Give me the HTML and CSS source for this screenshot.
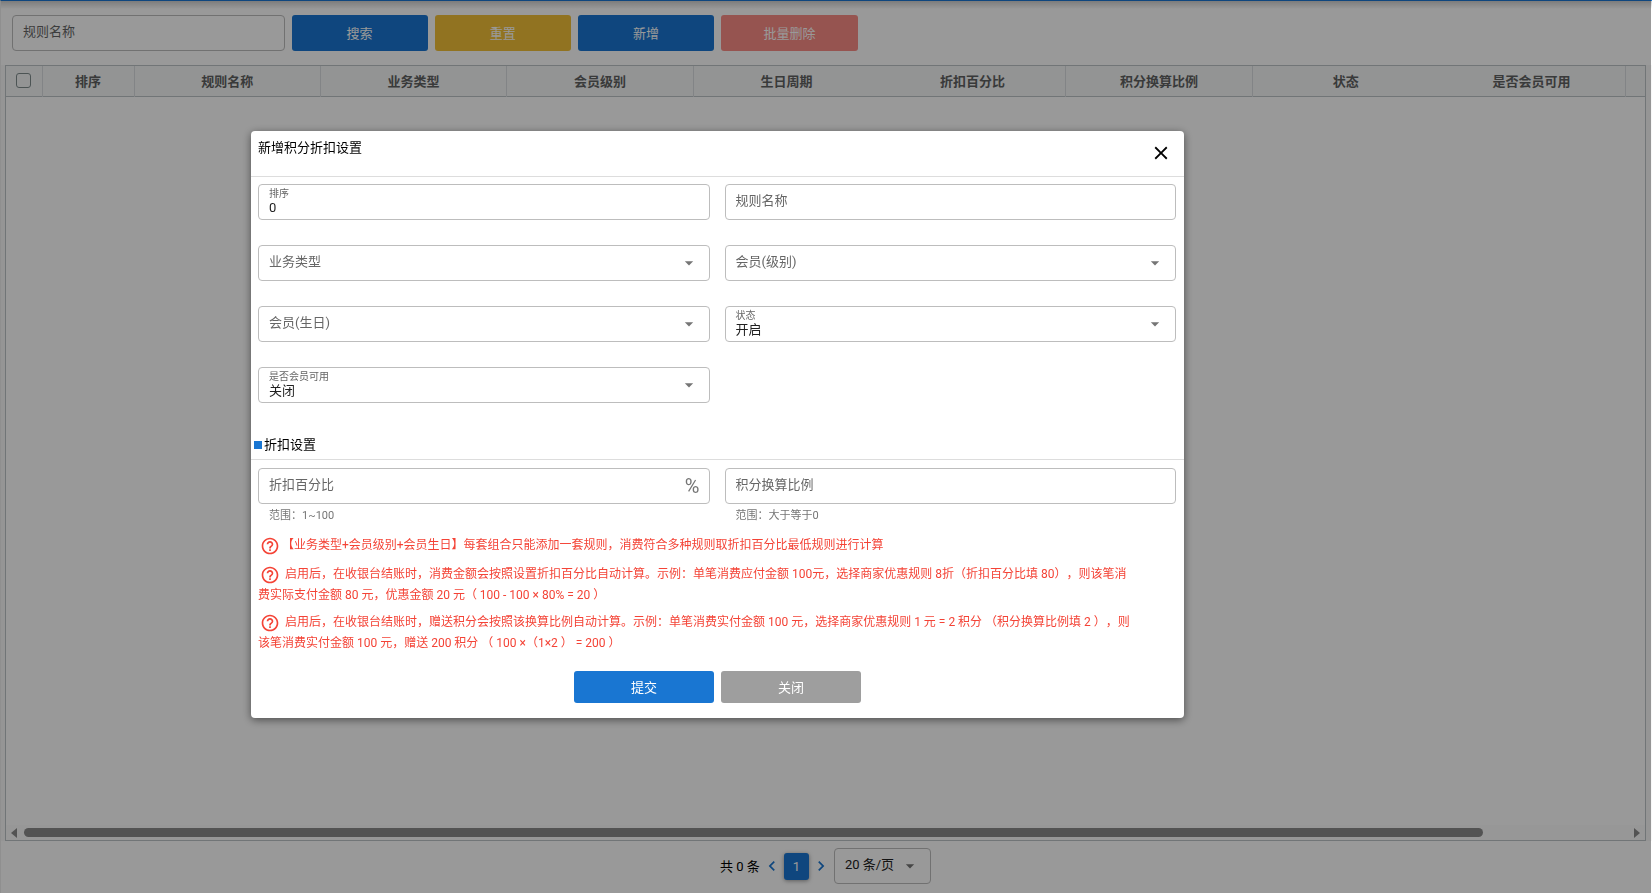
FILE: index.html
```html
<!DOCTYPE html>
<html lang="zh-CN">
<head>
<meta charset="utf-8">
<title>积分折扣设置</title>
<link rel="stylesheet" href="styles.css">
</head>
<body>
<svg width="0" height="0" class="sprite" aria-hidden="true">
  <symbol id="caret" viewBox="0 0 24 24"><path d="M7 10l5 5 5-5z"/></symbol>
  <symbol id="help" viewBox="0 0 24 24"><path d="M11 18h2v-2h-2v2zm1-16C6.48 2 2 6.48 2 12s4.48 10 10 10 10-4.48 10-10S17.52 2 12 2zm0 18c-4.41 0-8-3.59-8-8s3.59-8 8-8 8 3.59 8 8-3.59 8-8 8zm0-14c-2.21 0-4 1.79-4 4h2c0-1.1.9-2 2-2s2 .9 2 2c0 2-3 1.75-3 5h2c0-2.25 3-2.5 3-5 0-2.21-1.79-4-4-4z"/></symbol>
  <symbol id="close" viewBox="0 0 24 24"><path d="M19 6.41L17.59 5 12 10.59 6.41 5 5 6.41 10.59 12 5 17.59 6.41 19 12 13.41 17.59 19 19 17.59 13.41 12z"/></symbol>
  <symbol id="left" viewBox="0 0 24 24"><path d="M15.41 7.41L14 6l-6 6 6 6 1.41-1.41L10.83 12z"/></symbol>
  <symbol id="right" viewBox="0 0 24 24"><path d="M10 6L8.59 7.41 13.17 12l-4.58 4.59L10 18l6-6z"/></symbol>
</svg>
<main class="page">
  <form class="toolbar">
    <div class="field"><input type="text" placeholder="规则名称" aria-label="规则名称"></div>
    <button type="button" class="btn primary">搜索</button>
    <button type="button" class="btn warning">重置</button>
    <button type="button" class="btn primary">新增</button>
    <button type="button" class="btn danger" disabled>批量删除</button>
  </form>
  <div class="grid-wrap">
    <div class="grid">
      <table>
        <colgroup><col class="c-check"><col class="c-sort"><col><col><col><col><col><col><col><col><col class="c-end"></colgroup>
        <thead>
          <tr>
            <th><input type="checkbox" aria-label="全选"></th>
            <th>排序</th>
            <th>规则名称</th>
            <th>业务类型</th>
            <th>会员级别</th>
            <th class="no-line">生日周期</th>
            <th>折扣百分比</th>
            <th>积分换算比例</th>
            <th class="no-line">状态</th>
            <th>是否会员可用</th>
            <td></td>
          </tr>
        </thead>
      </table>
      <div class="scrollbar">
        <svg width="6" height="10" viewBox="0 0 6 10"><path d="M6 0v10L0 5z"/></svg>
        <div class="track"><div class="thumb"></div></div>
        <svg width="6" height="10" viewBox="0 0 6 10"><path d="M0 0v10l6-5z"/></svg>
      </div>
    </div>
  </div>
  <nav class="pager" aria-label="分页">
    <span>共 0 条</span>
    <button type="button" class="arrow" aria-label="上一页"><svg><use href="#left"/></svg></button>
    <button type="button" class="current">1</button>
    <button type="button" class="arrow" aria-label="下一页"><svg><use href="#right"/></svg></button>
    <div class="field page-size">
      <select aria-label="每页条数"><option>20 条/页</option></select>
      <svg class="caret"><use href="#caret"/></svg>
    </div>
  </nav>
</main>

<div class="backdrop">
  <section class="dialog" role="dialog" aria-modal="true" aria-labelledby="dlg-title">
    <header class="dialog-head">
      <h1 id="dlg-title">新增积分折扣设置</h1>
      <button type="button" class="close" aria-label="关闭窗口"><svg><use href="#close"/></svg></button>
    </header>
    <div class="fields">
      <div class="field">
        <div class="stack"><label for="sort">排序</label><input id="sort" type="text" value="0"></div>
      </div>
      <div class="field"><input type="text" placeholder="规则名称" aria-label="规则名称"></div>
      <div class="field">
        <select class="empty" aria-label="业务类型"><option>业务类型</option></select>
        <svg class="caret"><use href="#caret"/></svg>
      </div>
      <div class="field">
        <select class="empty" aria-label="会员(级别)"><option>会员(级别)</option></select>
        <svg class="caret"><use href="#caret"/></svg>
      </div>
      <div class="field">
        <select class="empty" aria-label="会员(生日)"><option>会员(生日)</option></select>
        <svg class="caret"><use href="#caret"/></svg>
      </div>
      <div class="field">
        <div class="stack"><label for="status">状态</label><select id="status"><option>开启</option><option>关闭</option></select></div>
        <svg class="caret"><use href="#caret"/></svg>
      </div>
      <div class="field">
        <div class="stack"><label for="member">是否会员可用</label><select id="member"><option>关闭</option><option>开启</option></select></div>
        <svg class="caret"><use href="#caret"/></svg>
      </div>
    </div>
    <h2 class="section-title">折扣设置</h2>
    <div class="fields discount">
      <div>
        <div class="field"><input type="text" placeholder="折扣百分比" aria-label="折扣百分比" aria-describedby="h1"><span class="percent">%</span></div>
        <p class="hint" id="h1">范围：1~100</p>
      </div>
      <div>
        <div class="field"><input type="text" placeholder="积分换算比例" aria-label="积分换算比例" aria-describedby="h2"></div>
        <p class="hint" id="h2">范围：大于等于0</p>
      </div>
    </div>
    <div class="notes">
      <p><svg><use href="#help"/></svg>【业务类型+会员级别+会员生日】每套组合只能添加一套规则，消费符合多种规则取折扣百分比最低规则进行计算</p>
      <p><svg><use href="#help"/></svg> 启用后，在收银台结账时，消费金额会按照设置折扣百分比自动计算。示例：单笔消费应付金额 100元，选择商家优惠规则 8折（折扣百分比填 80），则该笔消<br>费实际支付金额 80 元，优惠金额 20 元（ 100 - 100 × 80% = 20 ）</p>
      <p><svg><use href="#help"/></svg> 启用后，在收银台结账时，赠送积分会按照该换算比例自动计算。示例：单笔消费实付金额 100 元，选择商家优惠规则 1 元 = 2 积分 （积分换算比例填 2 ），则<br>该笔消费实付金额 100 元，赠送 200 积分 （ 100 ×（1×2 ） = 200 ）</p>
    </div>
    <footer class="actions">
      <button type="button" class="btn primary">提交</button>
      <button type="button" class="btn grey">关闭</button>
    </footer>
  </section>
</div>
</body>
</html>
```
FILE: styles.css
```css
* { box-sizing: border-box; }
body, h1, h2, p { margin: 0; }
body, button, input, select {
  font-family: Roboto, "Noto Sans CJK SC", sans-serif;
  font-size: 13px;
}
.sprite { position: absolute; }

.page {
  display: flex;
  flex-direction: column;
  height: 100vh;
  border-top: 1px solid #1976d2;
  border-left: 1px solid #eee;
  background: linear-gradient(#d0d0d0, #fff 8px);
}
.toolbar {
  display: grid;
  grid-template-columns: 2fr 1fr 1fr 1fr 1fr;
  gap: 7px;
  width: 52%;
  padding: 14px 2px 14px 11px;
}

.btn {
  height: 36px;
  padding: 0 0 2px;
  border: 0;
  border-radius: 3px;
  color: #fff;
}
.primary { background: #1976d2; }
.warning { background: #f2c037; }
.danger { background: #fb8c86; }
.grey { background: #9e9e9e; }

.field {
  display: flex;
  align-items: center;
  height: 36px;
  padding: 0 10px;
  border: 1px solid #bdbdbd;
  border-radius: 4px;
}
.field input, .field select {
  flex: 1;
  width: 100%;
  min-width: 0;
  padding: 0 0 3px;
  border: 0;
  outline: 0;
  background: none;
  color: #212121;
  appearance: none;
}
.field input::placeholder { color: #666; opacity: 1; }
.field select.empty { color: #666; }
.caret {
  flex: none;
  width: 20px;
  height: 20px;
  fill: #757575;
  pointer-events: none;
}
.stack { display: flex; flex: 1; flex-direction: column; }
.stack label { color: #666; font-size: 10px; line-height: 12px; }
.field .stack input, .field .stack select { flex: none; height: 16px; padding: 0; line-height: 16px; }

.grid-wrap {
  display: flex;
  flex: 1;
  padding: 0 6px 0 4px;
  background: #f8f8f8;
}
.grid {
  display: flex;
  flex: 1;
  flex-direction: column;
  justify-content: space-between;
  border: 1px solid #bdc3c7;
  background: #fff;
}
table { width: 100%; table-layout: fixed; border-collapse: collapse; }
.c-check { width: 36px; }
.c-sort { width: 92px; }
.c-end { width: 20px; }
thead tr { height: 30px; background: #f5f7f7; border-bottom: 1px solid #bdc3c7; }
th { padding: 0; border-right: 1px solid #d9dddf; color: #606162; font-weight: 700; }
th.no-line { border-right: 0; }
td { padding: 0; }
th input {
  display: block;
  width: 15px;
  height: 15px;
  margin: 0 auto;
  border: 1px solid #7f8c8d;
  border-radius: 3px;
  appearance: none;
}

.scrollbar {
  display: flex;
  align-items: center;
  gap: 7px;
  height: 15px;
  padding: 0 5px;
  background: #fcfcfc;
}
.scrollbar svg { fill: #8b8b8b; }
.track { flex: 1; }
.thumb { width: 91%; height: 9px; border-radius: 5px; background: #8b8b8b; }

.pager {
  display: flex;
  align-items: center;
  justify-content: center;
  height: 52px;
  padding: 0 2px 2px 0;
}
.pager > span { padding-bottom: 2px; }
.pager button { padding: 0; border: 0; }
.pager .arrow { width: 24px; height: 24px; background: none; }
.arrow svg { display: block; width: 20px; height: 20px; margin: 0 auto; fill: #1976d2; }
.pager .current {
  width: 25px;
  height: 27px;
  border-radius: 3px;
  background: #1976d2;
  box-shadow: 0 1px 4px rgba(0, 0, 0, .4);
  color: #fff;
}
.page-size { width: 97px; margin-left: 1px; }

.backdrop {
  position: fixed;
  inset: 0 1px 0 0;
  display: flex;
  align-items: flex-start;
  justify-content: center;
  padding-top: 131px;
  background: rgba(0, 0, 0, .4);
}
.dialog {
  width: 933px;
  max-width: 96%;
  margin-right: 216px;
  border-radius: 4px;
  background: #fff;
  box-shadow: 0 2px 8px rgba(0, 0, 0, .5);
}
.dialog-head {
  display: flex;
  align-items: flex-start;
  justify-content: space-between;
  height: 46px;
  padding: 8px 9px 8px 7px;
  border-bottom: 1px solid #ddd;
}
h1, h2 { font-size: 13px; font-weight: 400; line-height: 18px; }
.close { width: 28px; height: 28px; padding: 0; border: 0; background: none; }
.close svg { display: block; width: 22px; height: 22px; margin: 0 auto; }
.fields {
  display: grid;
  grid-template-columns: 1fr 1fr;
  gap: 25px 15px;
  padding: 7px 8px 0 7px;
}
.section-title {
  display: flex;
  align-items: center;
  gap: 2px;
  margin-top: 33px;
  padding: 0 3px 5px;
  border-bottom: 1px solid #ddd;
}
.section-title::before { content: ""; width: 8px; height: 8px; background: #1976d2; }
.discount { padding-top: 8px; }
.discount .field { padding-right: 9px; }
.percent { color: #757575; font-size: 20px; }
.hint { padding-left: 11px; color: #757575; font-size: 11px; line-height: 24px; }
.notes {
  padding: 7px 7px 0;
  color: #f44336;
  font-size: 12px;
  line-height: 21px;
  text-spacing-trim: space-all;
}
.notes p { margin-bottom: 6px; }
.notes p:first-child { margin-bottom: 8px; }
.notes svg { width: 20px; height: 20px; margin: 0 2px; vertical-align: middle; fill: #f44336; }
.actions { display: flex; justify-content: center; gap: 7px; padding: 11px 0 15px; }
.actions .btn { width: 140px; height: 32px; }
```
